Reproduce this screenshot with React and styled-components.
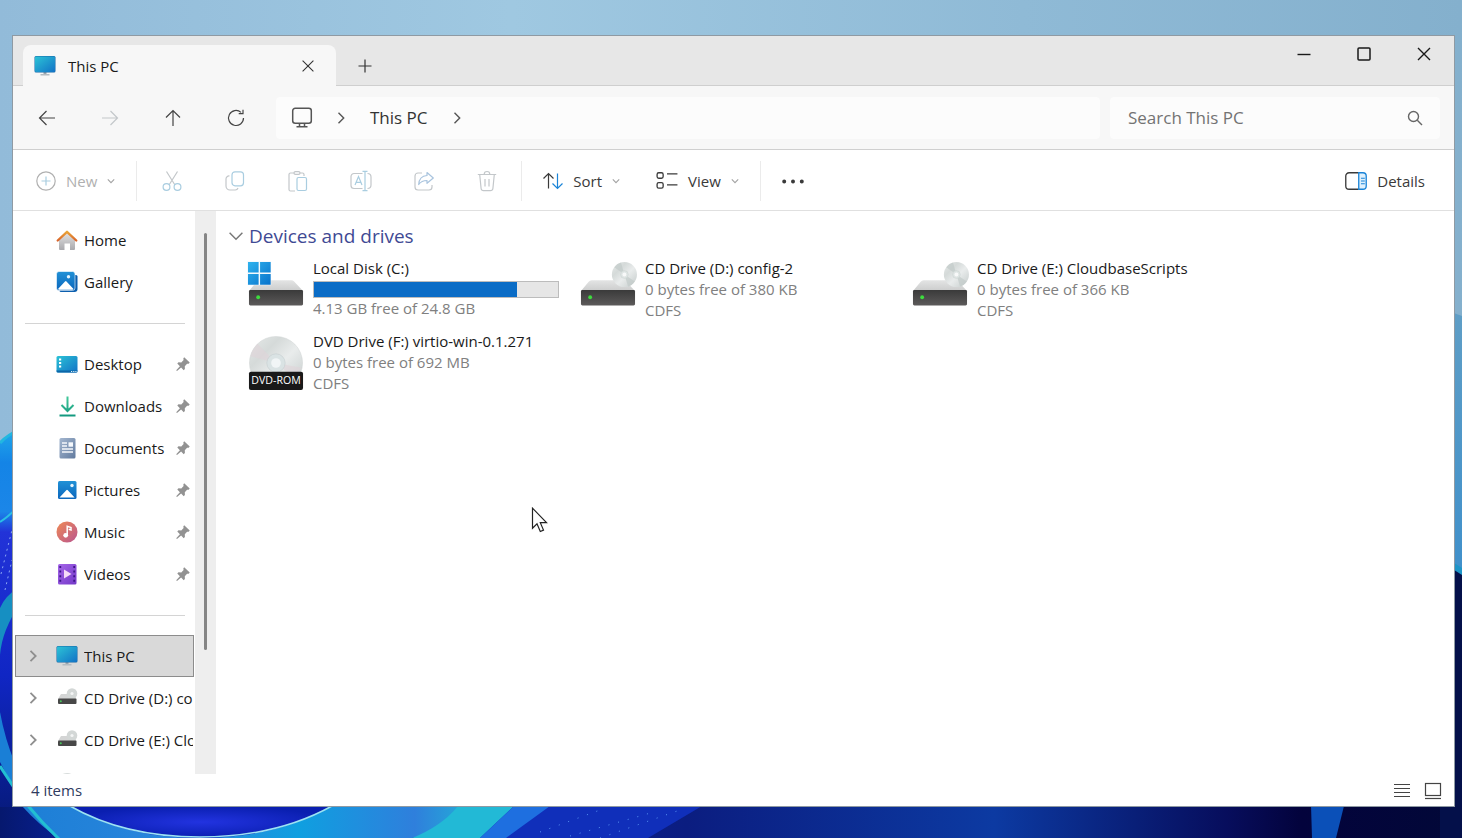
import React, { useState } from "react";
import styled, { createGlobalStyle } from "styled-components";

const quickLinks = [
  { name: "Desktop", icon: "desktop" },
  { name: "Downloads", icon: "downloads" },
  { name: "Documents", icon: "documents" },
  { name: "Pictures", icon: "pictures" },
  { name: "Music", icon: "music" },
  { name: "Videos", icon: "videos" }
];

const treeLinks = [
  { name: "This PC", icon: "pc" },
  { name: "CD Drive (D:) config-2", icon: "cdSmall" },
  { name: "CD Drive (E:) CloudbaseScripts", icon: "cdSmall" },
  { name: "DVD Drive (F:) virtio-win-0.1.271", icon: "discSmall" }
];

const drives = [
  { name: "Local Disk (C:)", icon: "disk", info: "4.13 GB free of 24.8 GB", used: 83 },
  { name: "CD Drive (D:) config-2", icon: "cd", info: "0 bytes free of 380 KB", fs: "CDFS" },
  { name: "CD Drive (E:) CloudbaseScripts", icon: "cd", info: "0 bytes free of 366 KB", fs: "CDFS" },
  { name: "DVD Drive (F:) virtio-win-0.1.271", icon: "dvd", info: "0 bytes free of 692 MB", fs: "CDFS" }
];

const Gradients = () => (
  <SvgHidden aria-hidden="true">
    <defs>
      <linearGradient id="gScreen" x1="0" y1="0" x2="1" y2="1">
        <stop offset="0" stopColor="#2cc3d6" />
        <stop offset="1" stopColor="#1272c6" />
      </linearGradient>
      <linearGradient id="gBlue" x1="0" y1="0" x2="0" y2="1">
        <stop offset="0" stopColor="#2191d6" />
        <stop offset="1" stopColor="#0a66bd" />
      </linearGradient>
      <linearGradient id="gHome" x1="0" y1="0" x2="0" y2="1">
        <stop offset="0" stopColor="#e6e6e6" />
        <stop offset="1" stopColor="#a9a9ad" />
      </linearGradient>
      <linearGradient id="gRoof" x1="0" y1="0" x2="0" y2="1">
        <stop offset="0" stopColor="#eaa437" />
        <stop offset="1" stopColor="#d9652b" />
      </linearGradient>
      <linearGradient id="gDoc" x1="0" y1="0" x2="1" y2="1">
        <stop offset="0" stopColor="#a4b7d0" />
        <stop offset="1" stopColor="#617a9e" />
      </linearGradient>
      <linearGradient id="gDown" x1="0" y1="0" x2="0" y2="1">
        <stop offset="0" stopColor="#43c99a" />
        <stop offset="1" stopColor="#149a80" />
      </linearGradient>
      <linearGradient id="gMusic" x1="0" y1="0" x2="1" y2="1">
        <stop offset="0" stopColor="#ef8a55" />
        <stop offset="1" stopColor="#b9558f" />
      </linearGradient>
      <linearGradient id="gVideo" x1="0" y1="0" x2="1" y2="1">
        <stop offset="0" stopColor="#a566e8" />
        <stop offset="1" stopColor="#7338c8" />
      </linearGradient>
      <linearGradient id="gDriveTop" x1="0" y1="0" x2="0" y2="1">
        <stop offset="0" stopColor="#e3e4e4" />
        <stop offset="1" stopColor="#cbcccc" />
      </linearGradient>
      <linearGradient id="gDriveFront" x1="0" y1="0" x2="0" y2="1">
        <stop offset="0" stopColor="#3a3a3a" />
        <stop offset="1" stopColor="#5c5a5a" />
      </linearGradient>
      <linearGradient id="gDisc" x1="0" y1="0" x2="1" y2="1">
        <stop offset="0" stopColor="#e6eae9" />
        <stop offset="0.3" stopColor="#d5dad9" />
        <stop offset="0.55" stopColor="#e9ecec" />
        <stop offset="1" stopColor="#c3cac9" />
      </linearGradient>
      <linearGradient id="gWin" x1="0" y1="0" x2="1" y2="1">
        <stop offset="0" stopColor="#2fb3ee" />
        <stop offset="1" stopColor="#0872cb" />
      </linearGradient>
    </defs>
  </SvgHidden>
);

const placeIcons = {
  pc: (
    <>
      <path d="M9.5 17h3v2.5h-3z" fill="#9aa5ad" />
      <path d="M6.5 19h9v1.5h-9z" fill="#b3bbc1" />
      <rect x="0.5" y="1" width="21" height="16.5" rx="1.5" fill="#1568a8" />
      <rect x="1" y="1.5" width="20" height="15.5" rx="1" fill="url(#gScreen)" />
    </>
  ),
  home: (
    <>
      <path d="M3 9.5L11 2.5l8 7V20a1 1 0 0 1-1 1h-4v-6.500H8.500V21H4a1 1 0 0 1-1-1z" fill="url(#gHome)" />
      <path d="M1.700 11.500L11 2.800l9.300 8.700" stroke="url(#gRoof)" strokeWidth="2.300" strokeLinecap="round" strokeLinejoin="round" fill="none" />
    </>
  ),
  gallery: (
    <>
      <path d="M19 4h1a1.500 1.500 0 0 1 1.500 1.500V18a3 3 0 0 1-3 3H5a1.500 1.500 0 0 1-1.500-1.500z" fill="#0c5fae" />
      <rect x="0.5" y="0.5" width="18.5" height="19" rx="2.5" fill="url(#gBlue)" stroke="#fff" strokeWidth="0.6" />
      <path d="M2 18l7-7.500a1 1 0 0 1 1.500 0l7 7.500a2 2 0 0 1-1 .7H3z" fill="#fff" />
      <circle cx="12.5" cy="5.8" r="1.7" fill="#e5f4fd" />
    </>
  ),
  desktop: (
    <>
      <rect x="0.5" y="3" width="21" height="16.5" rx="1.5" fill="url(#gScreen)" />
      <path d="M3 5.500h2.200v2H3zM3 9h2.200v2H3zM3 12.500h2.200v2H3z" fill="#fff" />
      <path d="M0.500 17.500h21V18a1.500 1.500 0 0 1-1.500 1.500H2A1.500 1.500 0 0 1 .5 18z" fill="#0c66a8" />
      <path d="M15 18.500h1.200M17.200 18.500h1.200M19.300 18.500h1.200" stroke="#d9f0fb" strokeWidth="1" />
    </>
  ),
  downloads: (
    <path d="M11.500 1.500v14M5.500 10l6 6 6-6M3.500 20.500h16" stroke="url(#gDown)" strokeWidth="2" fill="none" />
  ),
  documents: (
    <>
      <rect x="3.5" y="1" width="16" height="20.5" rx="1.5" fill="url(#gDoc)" />
      <path d="M6 6h5M6 9h5M6 12h11M6 15h11" stroke="#f5f8fc" strokeWidth="1.4" />
      <rect x="12.5" y="5.3" width="4.5" height="4.4" fill="#f5f8fc" />
    </>
  ),
  pictures: (
    <>
      <rect x="2" y="2" width="18.5" height="18" rx="1.5" fill="url(#gBlue)" />
      <path d="M3.500 18.500l6.800-7.200a1 1 0 0 1 1.500 0l6.800 7.200z" fill="#fff" />
      <circle cx="16" cy="6.5" r="1.7" fill="#e5f4fd" />
    </>
  ),
  music: (
    <>
      <circle cx="11" cy="11" r="10.5" fill="url(#gMusic)" />
      <circle cx="9.7" cy="14.3" r="2.4" fill="#fff" />
      <path d="M11.200 14.300V5.300l3.800 1.200v2.400l-2.300-.7" fill="none" stroke="#fff" strokeWidth="1.5" />
    </>
  ),
  videos: (
    <>
      <rect x="2" y="1" width="18.5" height="20.5" rx="1.5" fill="url(#gVideo)" />
      <path d="M4.300 3v17M18.200 3v17" stroke="#3c1586" strokeWidth="1.8" strokeDasharray="2 2.6" />
      <path d="M8 6.500v9l7.500-4.500z" fill="#f6dcf8" />
    </>
  ),
  cdSmall: (
    <>
      <path d="M5 7h13l2.500 5H2z" fill="#d4d5d5" />
      <circle cx="16" cy="6.5" r="5.3" fill="#d3d7d6" />
      <circle cx="16" cy="6.5" r="1.6" fill="#f4f5f5" />
      <rect x="2" y="11.5" width="18.5" height="5.5" rx="1" fill="#474747" />
      <circle cx="4.8" cy="14.2" r="1" fill="#47c85b" />
    </>
  ),
  discSmall: (
    <>
      <circle cx="11" cy="12" r="10" fill="url(#gDisc)" />
      <circle cx="11" cy="12" r="3" fill="#f4f5f5" />
    </>
  )
};

const PlaceIcon = ({ name }) => (
  <SvgIcon viewBox="0 0 22 22" $size={22} aria-hidden="true">
    {placeIcons[name]}
  </SvgIcon>
);

const DriveBox = () => (
  <>
    <path d="M11 18h33a4 4 0 0 1 2.500 1L56 29H0l8-9.500a4 4 0 0 1 3-1.500z" fill="url(#gDriveTop)" />
    <rect x="0" y="28" width="56" height="16" rx="1.5" fill="url(#gDriveFront)" />
    <circle cx="9.5" cy="35.5" r="2" fill="#3ddc3d" />
  </>
);

const driveIcons = {
  disk: (
    <>
      <DriveBox />
      <rect x="-2" y="-2" width="25" height="25" fill="#f5fafd" />
      <path d="M-1-1h11v11H-1zM11.500-1h11v11h-11zM-1 11.500h11v11H-1zM11.500 11.500h11v11h-11z" fill="url(#gWin)" />
    </>
  ),
  cd: (
    <>
      <DriveBox />
      <circle cx="45" cy="12" r="13" fill="url(#gDisc)" />
      <path d="M45 12L34.500 4.500a13 13 0 0 1 7-5zM45 12l10.800 7.200a13 13 0 0 1-7 5.200z" fill="#c2cac9" opacity="0.7" />
      <circle cx="45" cy="12" r="4" fill="#dfe5e4" stroke="#c9d0cf" strokeWidth="0.5" />
      <circle cx="45" cy="12" r="2" fill="#f8f9f9" />
    </>
  ),
  dvd: (
    <>
      <circle cx="28" cy="28" r="27.5" fill="url(#gDisc)" stroke="#cfd3d3" strokeWidth="0.5" />
      <path d="M28 28L1.500 21A27.500 27.500 0 0 1 9 8zM28 28l26.500 5-8 10z" fill="#dfd4d8" opacity="0.6" />
      <circle cx="28" cy="28" r="9.5" fill="#dae3e4" stroke="#c4cdce" strokeWidth="0.6" />
      <circle cx="28" cy="28" r="5" fill="#f1f5f6" />
      <rect x="0" y="37" width="56" height="19" rx="2" fill="#191919" />
      <text x="28" y="50" textAnchor="middle" fontSize="11" fontWeight="500" fill="#fff">
        DVD-ROM
      </text>
    </>
  )
};

const lineIcons = {
  back: <path d="M18 10H2.500M9.500 3L2.500 10l7 7" />,
  forward: <path d="M2 10h15.500M10.500 3l7 7-7 7" />,
  up: <path d="M10 18V2.500M3 9.500l7-7 7 7" />,
  refresh: <path d="M17.500 10A7.500 7.500 0 1 1 15 4.400M17 1.800v3.800h-4.300" />,
  monitor: (
    <>
      <rect x="0.7" y="0.2" width="18.6" height="15" rx="2.5" />
      <path d="M7.500 15.500v2.700M12.500 15.500v2.700M4.500 18.700h11" />
    </>
  ),
  chevronRight: <path d="M7.500 4.800l5.200 5.200-5.200 5.200" />,
  plus: <path d="M10 3.500v13M3.500 10h13" />,
  close: <path d="M4 4l12 12M16 4L4 16" />,
  minimize: <path d="M3.500 10.500h13" />,
  maximize: <rect x="4" y="4" width="12" height="12" rx="1" />,
  search: (
    <>
      <circle cx="8.5" cy="8.5" r="5" />
      <path d="M12.300 12.300l4.700 4.700" />
    </>
  ),
  add: (
    <>
      <circle cx="10" cy="10" r="9.2" />
      <path d="M10 5.500v9M5.500 10h9" stroke="#a9cde0" />
    </>
  ),
  cut: (
    <>
      <path d="M4.500.5l8.300 13.300M15.500.5L7.200 13.800" />
      <circle cx="4.5" cy="16" r="3.4" stroke="#a9cde0" />
      <circle cx="15.5" cy="16" r="3.4" stroke="#a9cde0" />
    </>
  ),
  copy: (
    <>
      <rect x="7" y="0.8" width="11.5" height="14" rx="3" stroke="#a9cde0" />
      <path d="M4.500 5A3 3 0 0 0 1 8v7a4 4 0 0 0 4 4h5a3 3 0 0 0 3-2" />
    </>
  ),
  paste: (
    <>
      <path d="M6 2H2.500A1.500 1.500 0 0 0 1 3.500v15A1.500 1.500 0 0 0 2.500 20H7M12 2h2.500A1.500 1.500 0 0 1 16 3.500V5" />
      <rect x="6" y="0.6" width="6" height="2.8" rx="1.4" />
      <rect x="9" y="6.5" width="9.5" height="13" rx="1.5" stroke="#a9cde0" />
    </>
  ),
  rename: (
    <>
      <path d="M11.500 2.500H3a3 3 0 0 0-3 3v9a3 3 0 0 0 3 3h8.500M16.500 2.500a3.500 3.500 0 0 1 3.500 3.500v8a3.500 3.500 0 0 1-3.500 3.500" />
      <path d="M4 14l3.500-8.500L11 14M5.200 11.300h4.600" stroke="#a9cde0" />
      <path d="M14 .5v19M11.500.3h5M11.500 19.700h5" stroke="#a9cde0" />
    </>
  ),
  share: (
    <>
      <path d="M8 2H4a3 3 0 0 0-3 3v11a3 3 0 0 0 3 3h11a3 3 0 0 0 3-3v-2" />
      <path d="M13 1.500L19.300 7 13 12.300V9.500c-4 0-6.200 1-8.300 4 .3-5 3.300-8.700 8.300-9z" stroke="#a9c4de" strokeLinejoin="round" />
    </>
  ),
  trash: (
    <>
      <path d="M.8 3.500h18.400M7.200 3.300a2.800 2.800 0 0 1 5.600 0M2.700 3.500l1.400 14A2.500 2.500 0 0 0 6.600 19.700h6.800a2.500 2.500 0 0 0 2.500-2.200l1.400-14" />
      <path d="M8 8v7.500M12 8v7.500" />
    </>
  ),
  sort: (
    <>
      <path d="M5.500 17.500v-15M.5 7.500l5-5 5 5" />
      <path d="M14.500 2.500v15M9.500 12.500l5 5 5-5" stroke="#1a84d8" />
    </>
  ),
  view: (
    <>
      <rect x="1" y="2.5" width="5.5" height="5" rx="1.5" />
      <rect x="1" y="11.5" width="5.5" height="5" rx="1.5" />
      <path d="M10 3.500h9.500M10 13.500h9.500" />
    </>
  ),
  more: <path d="M2 10.500h.01M10 10.500h.01M18 10.500h.01" strokeWidth="3.6" strokeLinecap="round" />,
  details: (
    <>
      <path d="M12.500 2.500H3.700A3 3 0 0 0 .7 5.500v9a3 3 0 0 0 3 3h8.800" />
      <path d="M12.500 2.500h3.800a3 3 0 0 1 3 3v9a3 3 0 0 1-3 3h-3.800z" stroke="#1a84d8" fill="#dff1fd" />
      <path d="M14.500 7.500H18M14.500 10H18M14.500 12.500H18" stroke="#1a84d8" strokeWidth="1" />
    </>
  ),
  list: <path d="M2 4.500h16M2 8.500h16M2 12.500h16M2 16.500h16" />,
  tiles: (
    <>
      <rect x="2.5" y="3.5" width="15" height="12" />
      <path d="M2 18.500h16" />
    </>
  )
};

const LineIcon = ({ name, size = 20, weight = 1.2 }) => (
  <SvgLine viewBox="0 0 20 20" $size={size} strokeWidth={weight} aria-hidden="true">
    {lineIcons[name]}
  </SvgLine>
);

const Chevron = ({ size = 8, weight = 1.4 }) => (
  <SvgLine viewBox="0 0 10 10" $size={size} strokeWidth={weight} aria-hidden="true">
    <path d="M1 3l4 4 4-4" />
  </SvgLine>
);

const Pin = () => (
  <SvgIcon viewBox="0 0 14 14" $size={14} fill="#929292" aria-label="Pinned">
    <path d="M8.200.3l5.500 5.300-1 1.200-1.600-.1-2.300 2.500.1 2.800-1.200 1.200-2.600-2.600L1 14l-.8-.8 3.700-4L1.300 6.500l1.200-1.200 2.800.1 2.300-2.300-.3-1.600z" />
  </SvgIcon>
);

const Wallpaper = () => (
  <SvgWallpaper viewBox="0 0 1462 838" preserveAspectRatio="none" aria-hidden="true">
    <defs>
      <linearGradient id="wSky" x1="0" y1="0" x2="1" y2="0">
        <stop offset="0" stopColor="#92bbd9" />
        <stop offset="0.35" stopColor="#9fc8e1" />
        <stop offset="0.7" stopColor="#8fbad6" />
        <stop offset="1" stopColor="#84b0cd" />
      </linearGradient>
      <linearGradient id="wFloor" x1="0" y1="0" x2="1" y2="0">
        <stop offset="0" stopColor="#06186e" />
        <stop offset="0.1" stopColor="#0b2ac0" />
        <stop offset="0.47" stopColor="#0b1d80" />
        <stop offset="0.68" stopColor="#0c3aa2" />
        <stop offset="0.84" stopColor="#070d5c" />
        <stop offset="0.89" stopColor="#03033c" />
        <stop offset="1" stopColor="#020838" />
      </linearGradient>
      <linearGradient id="wRing" x1="0" y1="0" x2="1" y2="0">
        <stop offset="0" stopColor="#1d7fd6" />
        <stop offset="0.35" stopColor="#2a86dd" />
        <stop offset="0.6" stopColor="#0f9fe0" />
        <stop offset="0.85" stopColor="#2f7fdc" />
        <stop offset="1" stopColor="#20b8d6" />
      </linearGradient>
      <linearGradient id="wPetal" x1="0" y1="430" x2="0" y2="838" gradientUnits="userSpaceOnUse">
        <stop offset="0" stopColor="#1fa8ea" />
        <stop offset="0.08" stopColor="#1484e6" />
        <stop offset="0.2" stopColor="#1b86e8" />
        <stop offset="0.25" stopColor="#2233d8" />
        <stop offset="0.6" stopColor="#1026c4" />
        <stop offset="0.9" stopColor="#081c86" />
        <stop offset="1" stopColor="#06186e" />
      </linearGradient>
      <linearGradient id="wBlueRight" x1="0" y1="0" x2="0" y2="1">
        <stop offset="0" stopColor="#5f9ec6" />
        <stop offset="1" stopColor="#3f90cb" />
      </linearGradient>
      <radialGradient id="wGlow">
        <stop offset="0" stopColor="#2233e0" />
        <stop offset="1" stopColor="#0a1fb0" />
      </radialGradient>
    </defs>
    <rect width="1462" height="838" fill="url(#wSky)" />
    <path d="M0 790h1462v48H0z" fill="url(#wFloor)" />
    <path d="M1440 308l22 8v260h-22z" fill="url(#wBlueRight)" />
    <path d="M1440 556l22 14v268h-22z" fill="#04104a" />
    <path d="M1440 554l22 14v7l-22-14z" fill="#1d95c8" />
    <path d="M0 443q6-7 20-14v378H0z" fill="url(#wPetal)" />
    <path d="M0 443q6-7 20-14" stroke="#22b7e0" strokeWidth="3" fill="none" />
    <path d="M0 522q8-5 20-17" stroke="#2ac0e4" strokeWidth="2" fill="none" />
    <path d="M1 574l11-44M5 590l7-30" stroke="#8aa6f4" strokeDasharray="2 4" />
    <path d="M0 608q5-12 20-22v18Q2 630 0 655z" fill="#168fc2" />
    <path d="M0 712q8 44 30 82l40 44H60Q20 802 0 762z" fill="#1a7fd6" />
    <path d="M22 806h462q-28 20-64 32H58q-20-14-36-32z" fill="url(#wRing)" />
    <path d="M70 806q54 32 130 32t132-32z" fill="url(#wGlow)" />
    <path d="M70 806q54 31 130 31t132-31" stroke="#9ce4f2" strokeWidth="1.5" fill="none" />
    <path d="M0 766q24 40 60 74" stroke="#22bfd2" strokeWidth="3" fill="none" />
    <path d="M484 806h218l-54 32H412q38-10 72-32z" fill="#102fba" />
    <path d="M458 806h56l-34 32h-68q30-12 46-32z" fill="#22b9d6" />
    <path d="M514 806h36l-44 32h-26z" fill="#1e6fe0" />
    <path d="M540 832l60-22M570 836l84-24M600 838l80-28" stroke="#5a96f5" strokeDasharray="1 9" />
    <path d="M1311 806h33l-8 32h-24z" fill="#0b50b8" />
  </SvgWallpaper>
);

const App = () => {
  const [selected, setSelected] = useState("This PC");
  const [open, setOpen] = useState(true);
  const [query, setQuery] = useState("");

  const quickList = quickLinks.map(el => (
    <ButtonPlace key={el.name} onClick={() => setSelected(el.name)}>
      <PlaceIcon name={el.icon} />
      <SpanPlaceName>{el.name}</SpanPlaceName>
      <Pin />
    </ButtonPlace>
  ));

  const treeList = treeLinks.map(el => (
    <ButtonPlace
      key={el.name}
      $tree
      $active={selected === el.name}
      onClick={() => setSelected(el.name)}
    >
      <SpanTreeArrow>
        <LineIcon name="chevronRight" weight={1.8} />
      </SpanTreeArrow>
      <PlaceIcon name={el.icon} />
      <SpanPlaceName>{el.name}</SpanPlaceName>
    </ButtonPlace>
  ));

  const driveList = drives.map(el => (
    <LiDrive key={el.name}>
      <SvgDrive viewBox="-1 -1 58 58" aria-hidden="true">
        {driveIcons[el.icon]}
      </SvgDrive>
      <DivDriveText>
        <PDriveName>{el.name}</PDriveName>
        {el.used && (
          <DivUsage>
            <DivUsageFill style={{ width: `${el.used}%` }} />
          </DivUsage>
        )}
        <PDriveInfo>{el.info}</PDriveInfo>
        {el.fs && <PDriveInfo>{el.fs}</PDriveInfo>}
      </DivDriveText>
    </LiDrive>
  ));

  return (
    <DivDesktop>
      <GlobalStyle />
      <Gradients />
      <Wallpaper />
      <MainWindow>
        <HeaderTabs>
          <DivTab>
            <PlaceIcon name="pc" />
            <SpanTabName>This PC</SpanTabName>
            <ButtonTab aria-label="Close tab">
              <LineIcon name="close" size={18} />
            </ButtonTab>
          </DivTab>
          <ButtonTab aria-label="New tab">
            <LineIcon name="plus" />
          </ButtonTab>
          <DivWindowButtons>
            <ButtonWindow aria-label="Minimize">
              <LineIcon name="minimize" weight={1.4} />
            </ButtonWindow>
            <ButtonWindow aria-label="Maximize">
              <LineIcon name="maximize" weight={1.5} />
            </ButtonWindow>
            <ButtonWindow aria-label="Close">
              <LineIcon name="close" weight={1.4} />
            </ButtonWindow>
          </DivWindowButtons>
        </HeaderTabs>

        <NavBar>
          <ButtonIcon aria-label="Back">
            <LineIcon name="back" />
          </ButtonIcon>
          <ButtonIcon aria-label="Forward" disabled>
            <LineIcon name="forward" />
          </ButtonIcon>
          <ButtonIcon aria-label="Up">
            <LineIcon name="up" />
          </ButtonIcon>
          <ButtonIcon aria-label="Refresh">
            <LineIcon name="refresh" />
          </ButtonIcon>
          <DivAddress>
            <LineIcon name="monitor" weight={1.5} />
            <LineIcon name="chevronRight" weight={1.4} />
            <AddressLink href="#this-pc">This PC</AddressLink>
            <LineIcon name="chevronRight" weight={1.4} />
          </DivAddress>
          <LabelSearch>
            <InputSearch
              type="text"
              aria-label="Search This PC"
              placeholder="Search This PC"
              value={query}
              onChange={e => setQuery(e.target.value)}
            />
            <LineIcon name="search" weight={1.4} />
          </LabelSearch>
        </NavBar>

        <DivToolbar>
          <ButtonTool disabled>
            <LineIcon name="add" />
            New
            <SpanMenuArrow>
              <Chevron />
            </SpanMenuArrow>
          </ButtonTool>
          <DivDivider />
          {["cut", "copy", "paste", "rename", "share", "trash"].map(name => (
            <ButtonIcon key={name} aria-label={name} disabled>
              <LineIcon name={name} />
            </ButtonIcon>
          ))}
          <DivDivider />
          <ButtonTool>
            <LineIcon name="sort" />
            Sort
            <SpanMenuArrow>
              <Chevron />
            </SpanMenuArrow>
          </ButtonTool>
          <ButtonTool>
            <LineIcon name="view" size={22} />
            View
            <SpanMenuArrow>
              <Chevron />
            </SpanMenuArrow>
          </ButtonTool>
          <DivDivider />
          <ButtonTool aria-label="See more">
            <LineIcon name="more" size={22} />
          </ButtonTool>
          <ButtonTool $end>
            <LineIcon name="details" size={22} />
            Details
          </ButtonTool>
        </DivToolbar>

        <DivBody>
          <AsidePlaces>
            <ButtonPlace>
              <PlaceIcon name="home" />
              <SpanPlaceName>Home</SpanPlaceName>
            </ButtonPlace>
            <ButtonPlace>
              <PlaceIcon name="gallery" />
              <SpanPlaceName>Gallery</SpanPlaceName>
            </ButtonPlace>
            <HrPlaces />
            {quickList}
            <HrPlaces />
            {treeList}
          </AsidePlaces>
          <DivScrollTrack>
            <DivScrollThumb />
          </DivScrollTrack>
          <SectionContent>
            <ButtonGroup aria-expanded={open} onClick={() => setOpen(!open)}>
              <SpanGroupArrow>
                <Chevron size={16} weight={0.9} />
              </SpanGroupArrow>
              Devices and drives
            </ButtonGroup>
            {open && <UlDrives>{driveList}</UlDrives>}
          </SectionContent>
        </DivBody>

        <FooterStatus>
          <SpanCount>4 items</SpanCount>
          <ButtonStatus aria-label="Details view">
            <LineIcon name="list" />
          </ButtonStatus>
          <ButtonStatus aria-label="Large icons view">
            <LineIcon name="tiles" />
          </ButtonStatus>
        </FooterStatus>
      </MainWindow>
      <SvgCursor viewBox="0 0 16 26" aria-hidden="true">
        <path
          d="M1 1.200v20l4.500-4.400 3.300 7.700 3.200-1.400-3.200-7.400h6.200z"
          fill="#fff"
          stroke="#222"
          strokeWidth="1.2"
        />
      </SvgCursor>
    </DivDesktop>
  );
};

export default App;

const GlobalStyle = createGlobalStyle`
  * {
    box-sizing: border-box;
  }
  body {
    margin: 0;
    font-family: "Open Sans", "Noto Sans", sans-serif;
    font-size: 15px;
    color: #1a1a1a;
  }
  button {
    padding: 0;
    border: none;
    background: transparent;
    font: inherit;
    color: inherit;
  }
`;

const DivDesktop = styled.div`
  position: relative;
  display: flex;
  height: 100vh;
  padding: 35px 7px 31px 12px;
  overflow: hidden;
`;

const SvgHidden = styled.svg`
  position: absolute;
  width: 0;
  height: 0;
`;

const SvgWallpaper = styled.svg`
  position: absolute;
  top: 0;
  left: 0;
  width: 100%;
  height: 100%;
`;

const SvgIcon = styled.svg`
  flex: none;
  width: ${({ $size }) => $size}px;
  height: ${({ $size }) => $size}px;
`;

const SvgLine = styled(SvgIcon)`
  fill: none;
  stroke: currentColor;
  overflow: visible;
`;

const SvgCursor = styled.svg`
  position: absolute;
  top: 507px;
  left: 531px;
  width: 17px;
  height: 26px;
`;

const MainWindow = styled.main`
  position: relative;
  display: flex;
  flex-direction: column;
  flex: 1;
  min-width: 0;
  border: 1px solid #8f9aa3;
  background-color: #fff;
`;

const HeaderTabs = styled.header`
  display: flex;
  align-items: flex-end;
  height: 50px;
  padding-left: 10px;
  background-color: #e7e7e7;
  box-shadow: inset 0 -1px #cfcfcf;
`;

const DivTab = styled.div`
  display: flex;
  align-items: center;
  gap: 12px;
  width: 313px;
  height: 41px;
  padding-left: 11px;
  border-radius: 8px 8px 0 0;
  background-color: #f7f7f7;
`;

const SpanTabName = styled.span`
  flex: 1;
  font-weight: 500;
`;

const ButtonTab = styled.button`
  display: flex;
  align-items: center;
  justify-content: center;
  width: 57px;
  height: 41px;
  color: #333;
`;

const DivWindowButtons = styled.div`
  display: flex;
  align-self: flex-start;
  margin-left: auto;
`;

const ButtonWindow = styled.button`
  display: flex;
  align-items: center;
  justify-content: center;
  width: 60px;
  height: 36px;
`;

const NavBar = styled.nav`
  display: flex;
  align-items: center;
  height: 64px;
  padding: 0 14px 0 2px;
  border-bottom: 1px solid #cfcfcf;
  background-color: #f7f7f7;
`;

const ButtonIcon = styled.button`
  display: flex;
  align-items: center;
  justify-content: center;
  width: 63px;
  height: 42px;
  color: ${({ disabled }) => (disabled ? "#c3c7ca" : "#444")};
`;

const DivAddress = styled.div`
  display: flex;
  align-items: center;
  flex: 1;
  gap: 19px;
  height: 42px;
  margin: 0 10px 0 9px;
  padding-left: 16px;
  border-radius: 4px;
  background-color: #fcfcfc;
  color: #555;
`;

const AddressLink = styled.a`
  font-size: 17px;
  color: #333;
  text-decoration: none;
`;

const LabelSearch = styled.label`
  display: flex;
  align-items: center;
  width: 330px;
  height: 42px;
  padding: 0 15px 0 18px;
  border-radius: 4px;
  background-color: #fcfcfc;
  color: #666;
`;

const InputSearch = styled.input`
  flex: 1;
  min-width: 0;
  padding: 0;
  border: none;
  outline: none;
  background: transparent;
  font: inherit;
  font-size: 17px;
  color: #333;
  &::placeholder {
    color: #737373;
  }
`;

const DivToolbar = styled.div`
  display: flex;
  align-items: center;
  height: 61px;
  padding: 2px 11px 0 5px;
  border-bottom: 1px solid #e0e0e0;
`;

const ButtonTool = styled.button`
  display: flex;
  align-items: center;
  gap: 10px;
  height: 42px;
  margin-left: ${({ $end }) => ($end ? "auto" : "0")};
  padding: 0 18px;
  color: ${({ disabled }) => (disabled ? "#b0b0b0" : "#3a3a3a")};
`;

const SpanMenuArrow = styled.span`
  display: flex;
  color: #a3a3a3;
`;

const DivDivider = styled.div`
  width: 1px;
  height: 40px;
  margin: 0 3px;
  background-color: #ebebeb;
`;

const DivBody = styled.div`
  display: flex;
  flex: 1;
  min-height: 0;
`;

const AsidePlaces = styled.aside`
  display: flex;
  flex-direction: column;
  width: 182px;
  padding: 8px 1px 0 2px;
  overflow: hidden;
`;

const ButtonPlace = styled.button`
  display: flex;
  flex: none;
  align-items: center;
  gap: 6px;
  height: 42px;
  padding-left: ${({ $tree }) => ($tree ? "7px" : "40px")};
  padding-right: ${({ $tree }) => ($tree ? "0" : "3px")};
  border: 1px solid ${({ $active }) => ($active ? "#8c8c8c" : "transparent")};
  background-color: ${({ $active }) => ($active ? "#d9d9d9" : "transparent")};
  text-align: left;
`;

const SpanTreeArrow = styled.span`
  display: flex;
  width: 27px;
  color: #8f8f8f;
`;

const SpanPlaceName = styled.span`
  flex: 1;
  min-width: 0;
  overflow: hidden;
  white-space: nowrap;
`;

const HrPlaces = styled.hr`
  flex: none;
  width: 160px;
  height: 1px;
  margin: 20px 0 19px 10px;
  border: none;
  background-color: #d4d4d4;
`;

const DivScrollTrack = styled.div`
  display: flex;
  justify-content: center;
  width: 21px;
  padding-top: 22px;
  background-color: #eee;
`;

const DivScrollThumb = styled.div`
  width: 3px;
  height: 77%;
  border-radius: 2px;
  background-color: #858585;
`;

const SectionContent = styled.section`
  flex: 1;
  min-width: 0;
  padding: 11px 0 0 12px;
`;

const ButtonGroup = styled.button`
  display: flex;
  align-items: center;
  gap: 5px;
  height: 28px;
  font-size: 19px;
  color: #3f4a94;
`;

const SpanGroupArrow = styled.span`
  display: flex;
  color: #777;
`;

const UlDrives = styled.ul`
  display: grid;
  grid-template-columns: repeat(auto-fill, 332px);
  row-gap: 10px;
  margin: 8px 0 0;
  padding: 0 0 0 20px;
  list-style: none;
`;

const LiDrive = styled.li`
  display: flex;
  gap: 9px;
`;

const SvgDrive = styled.svg`
  flex: none;
  width: 56px;
  height: 56px;
  margin-top: 4px;
  overflow: visible;
`;

const DivDriveText = styled.div`
  width: 246px;
  line-height: 21px;
`;

const PDriveName = styled.p`
  margin: 0;
  white-space: nowrap;
`;

const PDriveInfo = styled.p`
  margin: 0;
  color: #808080;
`;

const DivUsage = styled.div`
  height: 17px;
  margin-top: 2px;
  border: 1px solid #bcbcbc;
  background-color: #e6e6e6;
`;

const DivUsageFill = styled.div`
  height: 100%;
  background-color: #0a6cc6;
`;

const FooterStatus = styled.footer`
  display: flex;
  align-items: center;
  height: 32px;
  padding: 0 6px 0 18px;
`;

const SpanCount = styled.span`
  flex: 1;
  color: #2f3b60;
`;

const ButtonStatus = styled.button`
  display: flex;
  align-items: center;
  justify-content: center;
  width: 31px;
  height: 28px;
  color: #444;
`;
